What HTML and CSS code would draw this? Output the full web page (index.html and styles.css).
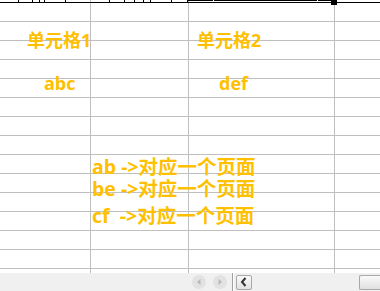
FILE: index.html
```html
<!DOCTYPE html>
<html>
<head>
<meta charset="utf-8">
<link rel="stylesheet" href="styles.css">
</head>
<body>
<div class="sheet">
  <div class="grid">
    <div class="c top"></div><div class="c top"></div><div class="c top"></div><div class="c top e"></div>
    <div class="c"></div><div class="c"></div><div class="c"></div><div class="c e"></div>
    <div class="c"></div><div class="c"></div><div class="c"></div><div class="c e"></div>
    <div class="c"></div><div class="c"></div><div class="c"></div><div class="c e"></div>
    <div class="c"></div><div class="c"></div><div class="c"></div><div class="c e"></div>
    <div class="c"></div><div class="c"></div><div class="c"></div><div class="c e"></div>
    <div class="c"></div><div class="c"></div><div class="c"></div><div class="c e"></div>
    <div class="c"></div><div class="c"></div><div class="c"></div><div class="c e"></div>
    <div class="c"></div><div class="c"></div><div class="c"></div><div class="c e"></div>
    <div class="c"></div><div class="c"></div><div class="c"></div><div class="c e"></div>
    <div class="c"></div><div class="c"></div><div class="c"></div><div class="c e"></div>
    <div class="c"></div><div class="c"></div><div class="c"></div><div class="c e"></div>
    <div class="c"></div><div class="c"></div><div class="c"></div><div class="c e"></div>
    <div class="c"></div><div class="c"></div><div class="c"></div><div class="c e"></div>
    <div class="c last"></div><div class="c last"></div><div class="c last"></div><div class="c last e"></div>
  </div>

  <svg class="edge" width="380" height="5" viewBox="0 0 380 5">
    <rect x="0" y="2" width="188" height="1" fill="#000"/>
    <rect x="188" y="0" width="143" height="1" fill="#000"/>
    <rect x="188" y="2" width="143" height="1" fill="#000"/>
    <rect x="187" y="0" width="1" height="3" fill="#000"/>
    <rect x="337" y="2" width="43" height="1" fill="#000"/>
    <rect x="331" y="0" width="6" height="5" fill="#000"/>
    <rect x="213" y="0" width="1" height="1" fill="#fff"/>
    <rect x="317" y="0" width="1" height="1" fill="#fff"/>
    <g fill="#000">
      <rect x="18" y="0" width="1" height="2"/>
      <rect x="32" y="0" width="1" height="2"/>
      <rect x="39" y="0" width="1" height="2"/>
      <rect x="44" y="0" width="1" height="2"/>
      <rect x="65" y="0" width="1" height="2"/>
      <rect x="109" y="0" width="1" height="2"/>
      <rect x="124" y="0" width="1" height="2"/>
      <rect x="134" y="0" width="1" height="2"/>
      <rect x="143" y="0" width="1" height="2"/>
      <rect x="150" y="0" width="1" height="2"/>
      <rect x="171" y="0" width="1" height="2"/>
    </g>
  </svg>

  <div class="label l1">单元格1</div>
  <div class="label l2">abc</div>
  <div class="label l3">单元格2</div>
  <div class="label l4">def</div>
  <div class="notes">
    <div class="note">ab -&gt;对应一个页面</div>
    <div class="note">be -&gt;对应一个页面</div>
    <div class="note third">cf&nbsp; -&gt;对应一个页面</div>
  </div>
</div>

<div class="bar">
  <div class="nav"><svg width="14" height="14" viewBox="0 0 14 14"><circle cx="7" cy="7" r="7" fill="#e2e2e2"/><path d="M8.5 4 L5 7 L8.5 10 Z" fill="#b9b9b9"/></svg></div>
  <div class="nav"><svg width="14" height="14" viewBox="0 0 14 14"><circle cx="7" cy="7" r="7" fill="#e2e2e2"/><path d="M5.5 4 L9 7 L5.5 10 Z" fill="#b9b9b9"/></svg></div>
  <div class="sep"></div>
  <div class="btn"><svg width="10" height="12" viewBox="0 0 10 12"><path d="M6.5 2 L3 6 L6.5 10" fill="none" stroke="#333" stroke-width="2"/></svg></div>
  <div class="track"></div>
  <div class="thumb"></div>
</div>
</body>
</html>
```

FILE: styles.css
```css
html, body {
  margin: 0;
  padding: 0;
  width: 380px;
  height: 291px;
  overflow: hidden;
  background: #fff;
}

.sheet {
  position: relative;
  width: 380px;
  height: 273px;
  overflow: hidden;
}

.grid {
  display: grid;
  grid-template-columns: 91px 98px 146px 1fr;
  grid-template-rows: 22px;
  grid-auto-rows: 19px;
}

.c {
  box-sizing: border-box;
  border-right: 1px solid #bfbfbf;
  border-bottom: 1px solid #bfbfbf;
}

.c.e {
  border-right: none;
}

.c.last {
  border-bottom: none;
}

.edge {
  position: absolute;
  left: 0;
  top: 0;
  display: block;
}

.label,
.notes {
  position: absolute;
  font-family: "Open Sans", "Noto Sans CJK SC", sans-serif;
  font-weight: 700;
  color: #ffc000;
  white-space: nowrap;
}

.label {
  font-size: 18px;
  line-height: 20px;
}

.l1 { left: 27px; top: 30px; }
.l2 { left: 44px; top: 73px; }
.l3 { left: 197px; top: 30px; }
.l4 { left: 219px; top: 73px; }

.notes {
  left: 92px;
  top: 156px;
  font-size: 19.5px;
  line-height: 22px;
}

.note.third {
  margin-top: 5px;
}

.bar {
  height: 18px;
  background: #f0f0f0;
  display: flex;
  align-items: center;
  padding-left: 192px;
}

.nav {
  width: 14px;
  height: 14px;
  margin-right: 7px;
  display: flex;
}

.sep {
  width: 1px;
  height: 18px;
  background: #a0a0a0;
  border-right: 1px solid #fff;
  margin-left: -2px;
  margin-right: 2px;
}

.btn {
  box-sizing: border-box;
  width: 16px;
  height: 15px;
  border: 1px solid #a8a8a8;
  border-radius: 2px;
  background: linear-gradient(#fafafa, #e2e2e2);
  display: flex;
  align-items: center;
  justify-content: center;
}

.track {
  flex: 1;
}

.thumb {
  box-sizing: border-box;
  width: 21px;
  height: 15px;
  border: 1px solid #a8a8a8;
  border-right: none;
  border-radius: 2px 0 0 2px;
  background: linear-gradient(#fafafa, #e0e0e0);
}
```
